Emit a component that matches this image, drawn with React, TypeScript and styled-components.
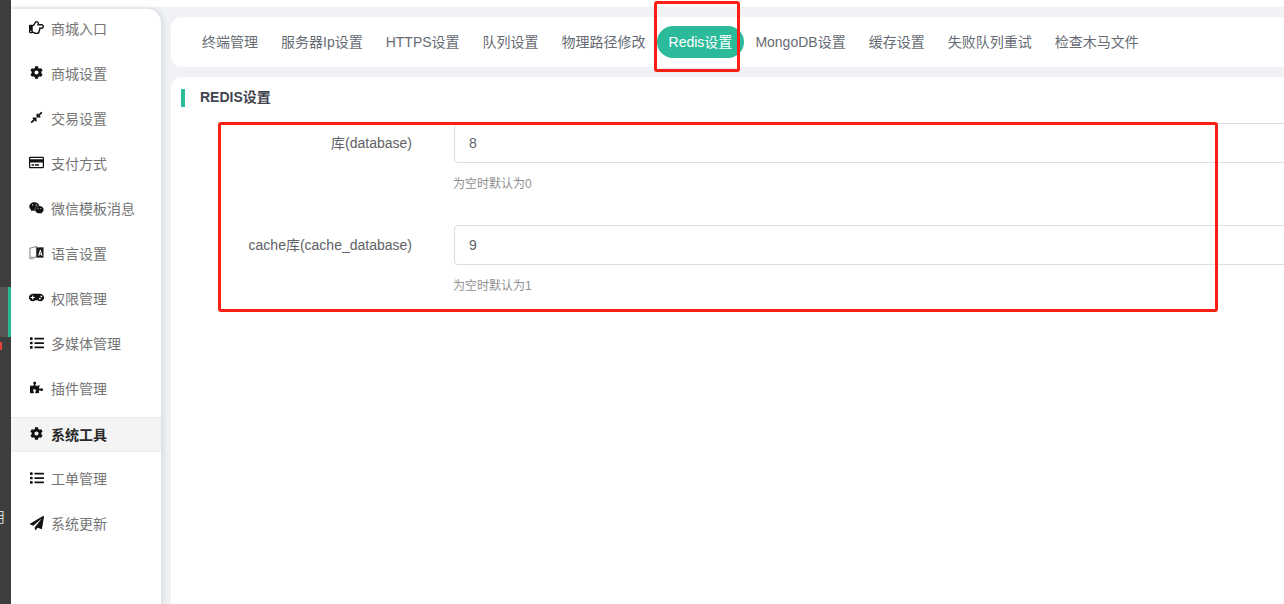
import styled, { createGlobalStyle } from 'styled-components';
import type { ComponentType } from 'react';
import {
  FaCog,
  FaCompressAlt,
  FaGamepad,
  FaList,
  FaPaperPlane,
  FaPuzzlePiece,
  FaRegCreditCard,
  FaRegHandPointRight,
  FaWeixin,
} from 'react-icons/fa';

const GlobalStyle = createGlobalStyle`
  html, body {
    margin: 0;
    padding: 0;
    background: #fff;
    overflow: hidden;
  }
  body {
    font-family: "Liberation Sans", "Noto Sans CJK SC", sans-serif;
  }
`;

const Shell = styled.div`
  position: relative;
  display: flex;
  width: 1284px;
  height: 604px;
  overflow: hidden;
`;

const Rail = styled.div`
  flex: none;
  display: flex;
  flex-direction: column;
  width: 11px;
  background: #3e3e3e;
  overflow: hidden;
`;

const RailActive = styled.div`
  flex: none;
  width: 8px;
  height: 50px;
  margin-top: 287px;
  background: #575757;
  border-right: 3px solid #2bb999;
`;

const RailBadge = styled.div`
  flex: none;
  width: 2px;
  height: 8px;
  margin-top: 5px;
  background: #e8423f;
`;

const RailGlyph = styled.div`
  flex: none;
  width: 20px;
  margin: 157px 0 0 -9px;
  font-size: 14px;
  line-height: 20px;
  color: #d8d8d8;
`;

const Workspace = styled.div`
  flex: 1;
  display: flex;
  flex-direction: column;
  min-width: 0;
`;

const TopStrip = styled.div`
  flex: none;
  height: 7px;
  background: #fff;
`;

const Body = styled.div`
  flex: 1;
  display: flex;
  min-height: 0;
  background: #f0f2f5;
`;

const Sidebar = styled.nav`
  flex: none;
  display: flex;
  flex-direction: column;
  gap: 10px;
  width: 150px;
  margin-top: 2px;
  padding-top: 3px;
  background: #fff;
  border-top-right-radius: 14px;
  box-shadow: 2px 0 6px rgba(0, 21, 41, 0.12);
`;

const MenuRow = styled.div<{ $active?: boolean }>`
  display: flex;
  align-items: center;
  box-sizing: border-box;
  height: 35px;
  padding: 0 0 ${(p) => (p.$active ? 2 : 4)}px 18px;
  font-size: 14px;
  font-weight: ${(p) => (p.$active ? 700 : 400)};
  color: ${(p) => (p.$active ? '#282828' : '#757575')};
  background: ${(p) => (p.$active ? '#f4f4f4' : 'transparent')};
  border-top: 1px solid ${(p) => (p.$active ? '#ececec' : 'transparent')};
  border-bottom: 1px solid ${(p) => (p.$active ? '#ececec' : 'transparent')};
`;

const MenuIcon = styled.span`
  flex: none;
  display: flex;
  align-items: center;
  justify-content: center;
  width: 15px;
  height: 15px;
  margin-right: 7px;
  color: #111;
`;

const Main = styled.main`
  flex: 1;
  display: flex;
  flex-direction: column;
  gap: 10px;
  min-width: 0;
  padding: 10px 0 0 10px;
  overflow: hidden;
`;

const TabsCard = styled.div`
  flex: none;
  display: flex;
  align-items: center;
  box-sizing: border-box;
  width: 1200px;
  height: 50px;
  padding-left: 19.5px;
  background: #fff;
  border-radius: 10px;
`;

const Tab = styled.span<{ $active?: boolean }>`
  box-sizing: border-box;
  height: 32px;
  padding: 0 11.5px;
  font-size: 14px;
  line-height: 32px;
  white-space: nowrap;
  color: ${(p) => (p.$active ? '#fff' : '#666b73')};
  background: ${(p) => (p.$active ? '#2bbb9b' : 'transparent')};
  border-radius: 16px;
`;

const ContentCard = styled.section`
  flex: 1;
  box-sizing: border-box;
  width: 1200px;
  padding: 12px 0 0 10px;
  background: #fff;
  border-radius: 10px 0 0 0;
`;

const SectionTitle = styled.h2`
  display: flex;
  align-items: center;
  box-sizing: border-box;
  height: 18px;
  margin: 0 0 16px;
  padding: 0 0 5px 15px;
  font-size: 14px;
  font-weight: 700;
  color: #3f4450;
  border-left: 4px solid #2bbb9b;
`;

const FormRow = styled.div`
  display: flex;
  margin-bottom: 33px;
`;

const FieldLabel = styled.label`
  flex: none;
  width: 231px;
  font-size: 14px;
  line-height: 40px;
  text-align: right;
  color: #606266;
`;

const FieldBody = styled.div`
  flex: none;
  width: 900px;
  margin-left: 42px;
`;

const FieldInput = styled.input`
  display: block;
  box-sizing: border-box;
  width: 100%;
  height: 40px;
  padding: 0 14px;
  font-family: inherit;
  font-size: 14px;
  color: #606266;
  background: #fff;
  border: 1px solid #dcdee2;
  border-radius: 4px;
  outline: none;
`;

const FieldHint = styled.div`
  margin: 13px 0 0 -1px;
  font-size: 12px;
  line-height: 16px;
  color: #8f8f8f;
`;

const TabHighlight = styled.div`
  position: absolute;
  left: 654px;
  top: 1px;
  box-sizing: border-box;
  width: 86px;
  height: 71px;
  border: 3px solid #ff1e14;
  border-radius: 3px;
  pointer-events: none;
`;

const FormHighlight = styled.div`
  position: absolute;
  left: 218px;
  top: 122px;
  box-sizing: border-box;
  width: 1000px;
  height: 190px;
  border: 3px solid #ff1e14;
  border-radius: 3px;
  pointer-events: none;
`;

function LanguageIcon({ size = 15 }: { size?: number }) {
  return (
    <svg width={size} height={size} viewBox="0 0 16 16">
      <path d="M1 3.5 8 1.5v11l-7 2z" fill="none" stroke="#8a8a8a" strokeWidth="1.2" />
      <path d="M8 2.5h7.5v11H8z" fill="#1a1a1a" />
      <path d="M9.8 11.5 11.7 5h.8l1.9 6.5h-1.2l-.4-1.5h-1.5l-.4 1.5zM11.6 9h1l-.5-2z" fill="#fff" />
      <path d="M3 11.5 3 15.5 6.5 13.5" fill="none" stroke="#b5b5b5" strokeWidth="1" />
    </svg>
  );
}

type MenuEntry = {
  label: string;
  Icon: ComponentType<{ size?: number }>;
  size: number;
  active?: boolean;
};

const menu: MenuEntry[] = [
  { label: '商城入口', Icon: FaRegHandPointRight, size: 15 },
  { label: '商城设置', Icon: FaCog, size: 13 },
  { label: '交易设置', Icon: FaCompressAlt, size: 13 },
  { label: '支付方式', Icon: FaRegCreditCard, size: 15 },
  { label: '微信模板消息', Icon: FaWeixin, size: 16 },
  { label: '语言设置', Icon: LanguageIcon, size: 15 },
  { label: '权限管理', Icon: FaGamepad, size: 15 },
  { label: '多媒体管理', Icon: FaList, size: 14 },
  { label: '插件管理', Icon: FaPuzzlePiece, size: 13 },
  { label: '系统工具', Icon: FaCog, size: 13, active: true },
  { label: '工单管理', Icon: FaList, size: 14 },
  { label: '系统更新', Icon: FaPaperPlane, size: 14 },
];

const tabs = [
  '终端管理',
  '服务器Ip设置',
  'HTTPS设置',
  '队列设置',
  '物理路径修改',
  'Redis设置',
  'MongoDB设置',
  '缓存设置',
  '失败队列重试',
  '检查木马文件',
];

const fields = [
  { label: '库(database)', value: '8', hint: '为空时默认为0' },
  { label: 'cache库(cache_database)', value: '9', hint: '为空时默认为1' },
];

export default function App() {
  return (
    <>
      <GlobalStyle />
      <Shell>
        <Rail>
          <RailActive />
          <RailBadge />
          <RailGlyph>用</RailGlyph>
        </Rail>
        <Workspace>
          <TopStrip />
          <Body>
            <Sidebar>
              {menu.map(({ label, Icon, size, active }) => (
                <MenuRow key={label} $active={active}>
                  <MenuIcon>
                    <Icon size={size} />
                  </MenuIcon>
                  {label}
                </MenuRow>
              ))}
            </Sidebar>
            <Main>
              <TabsCard>
                {tabs.map((tab) => (
                  <Tab key={tab} $active={tab === 'Redis设置'}>
                    {tab}
                  </Tab>
                ))}
              </TabsCard>
              <ContentCard>
                <SectionTitle>REDIS设置</SectionTitle>
                {fields.map((field) => (
                  <FormRow key={field.label}>
                    <FieldLabel>{field.label}</FieldLabel>
                    <FieldBody>
                      <FieldInput readOnly value={field.value} />
                      <FieldHint>{field.hint}</FieldHint>
                    </FieldBody>
                  </FormRow>
                ))}
              </ContentCard>
            </Main>
          </Body>
        </Workspace>
        <TabHighlight />
        <FormHighlight />
      </Shell>
    </>
  );
}
